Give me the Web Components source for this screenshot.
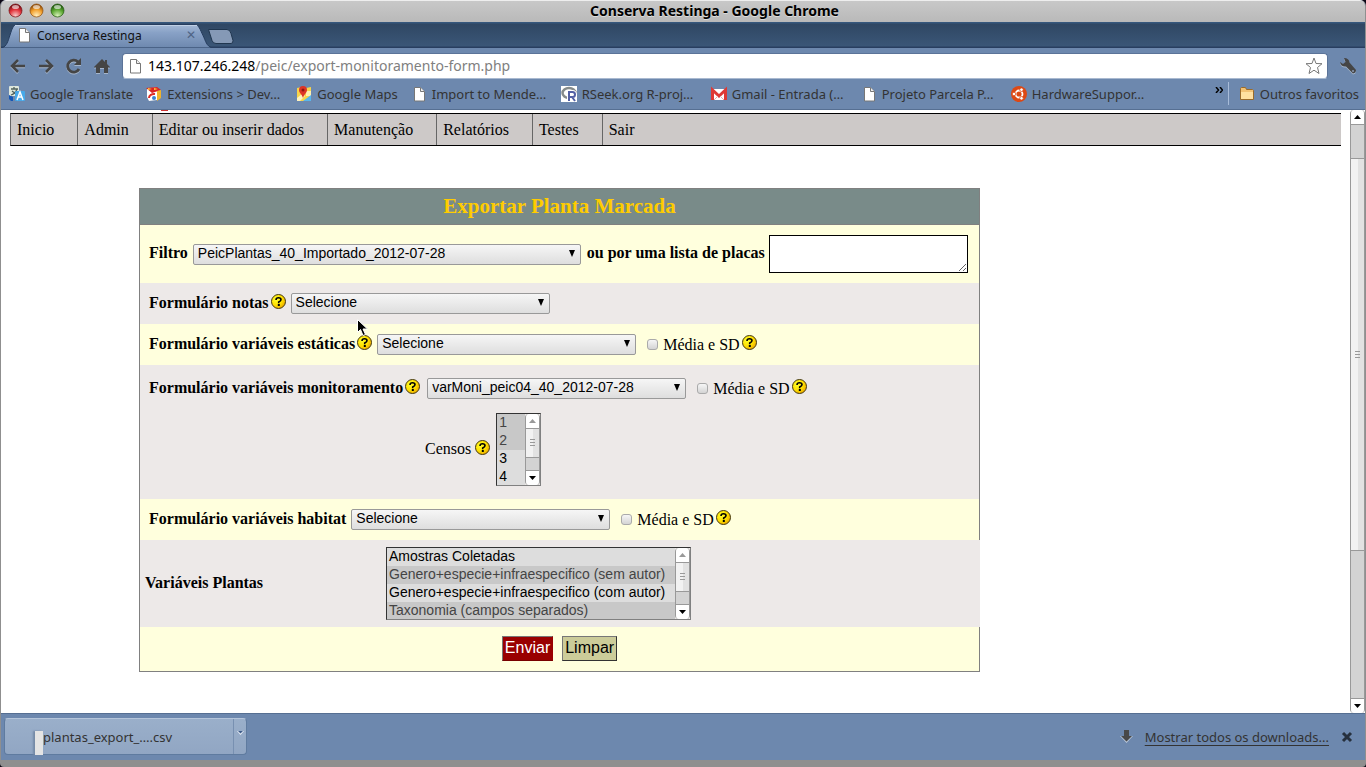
<!DOCTYPE html>
<html lang="pt-BR">

<head>
    <meta charset="UTF-8">
    <meta name="viewport" content="width=device-width, initial-scale=1.0">
    <title>Conserva Restinga</title>
    <style>
        html,
        body {
            height: 100%;
            margin: 0;
            background: #0b0614;
        }
    </style>
</head>

<body>
    <browser-window>
        <title-bar>Conserva Restinga - Google Chrome</title-bar>
        <tab-strip>Conserva Restinga</tab-strip>
        <nav-toolbar></nav-toolbar>
        <bookmarks-bar>
            <bookmark-item icon="translate">Google Translate</bookmark-item>
            <bookmark-item icon="extensions" clipped>Extensions &gt; Dev…</bookmark-item>
            <bookmark-item icon="maps">Google Maps</bookmark-item>
            <bookmark-item icon="page" clipped>Import to Mende…</bookmark-item>
            <bookmark-item icon="rseek" clipped>RSeek.org R-proj…</bookmark-item>
            <bookmark-item icon="gmail" clipped>Gmail - Entrada (…</bookmark-item>
            <bookmark-item icon="page" clipped>Projeto Parcela P…</bookmark-item>
            <bookmark-item icon="ubuntu" clipped>HardwareSuppor…</bookmark-item>
            <bookmark-item slot="other" icon="folder">Outros favoritos</bookmark-item>
        </bookmarks-bar>
        <page-view>
            <page-menu>
                <menu-link>Inicio</menu-link>
                <menu-link>Admin</menu-link>
                <menu-link>Editar ou inserir dados</menu-link>
                <menu-link>Manutenção</menu-link>
                <menu-link>Relatórios</menu-link>
                <menu-link>Testes</menu-link>
                <menu-link last>Sair</menu-link>
            </page-menu>
            <export-form>
                <form-row tone="light" size="tall">
                    <select-field label="Filtro" wide value="PeicPlantas_40_Importado_2012-07-28"></select-field>
                    <text-field label="ou por uma lista de placas"></text-field>
                </form-row>
                <form-row>
                    <select-field label="Formulário notas" help value="Selecione"></select-field>
                </form-row>
                <form-row tone="light">
                    <select-field label="Formulário variáveis estáticas" help value="Selecione"></select-field>
                    <check-field label="Média e SD"></check-field>
                </form-row>
                <form-row size="group">
                    <select-field label="Formulário variáveis monitoramento" help spaced value="varMoni_peic04_40_2012-07-28"></select-field>
                    <check-field label="Média e SD"></check-field>
                    <list-field slot="more" label="Censos" help options="1|2|3|4|5|6" selected="0,1"></list-field>
                </form-row>
                <form-row tone="light">
                    <select-field label="Formulário variáveis habitat" value="Selecione"></select-field>
                    <check-field label="Média e SD"></check-field>
                </form-row>
                <form-row size="list">
                    <list-field label="Variáveis Plantas" strong
                        options="Amostras Coletadas|Genero+especie+infraespecifico (sem autor)|Genero+especie+infraespecifico (com autor)|Taxonomia (campos separados)|Parcela|Coordenadas"
                        selected="1,3"></list-field>
                </form-row>
                <form-row tone="light" size="actions">
                    <form-button kind="send">Enviar</form-button>
                    <form-button kind="clear">Limpar</form-button>
                </form-row>
            </export-form>
        </page-view>
        <download-shelf file="plantas_export_….csv"></download-shelf>
    </browser-window>

    <script>
        const UI_FONT = '"Noto Sans", "Open Sans", sans-serif';

        const PAGE_ICON = `<path d="M3.500 1.500h6l4 4v9.500h-10z" fill="#fff" stroke="#777"/><path d="M9.500 1.500v4h4" fill="#eee" stroke="#777"/>`;

        const ICONS = {
            page: PAGE_ICON,
            translate: `<rect width="10" height="10" rx="1" fill="#dfe8dd"/><path d="M2 3h7M5 1v2M8 3C7 6 5 8 2 9M3 5l4 3" stroke="#53635d" stroke-width="1.300" fill="none"/><path d="M0 9l4 2v4H2L0 13z" fill="#1556b5"/><rect x="6" y="5" width="10" height="10" rx="1" fill="#48a9e8"/><path d="M8 14l3-8 3 8M9 11h4" stroke="#fff" stroke-width="1.500" fill="none"/>`,
            extensions: `<path d="M1 3l10-2v13l-8 1-2-4z" fill="#fff"/><path d="M0 2l11-1 4 3-9 3z" fill="#d92323"/><path d="M11 5l4-1v8l-4 3z" fill="#efb32b"/><path d="M2 2l4 1-4 1zM8 2l4 1-4 1z" fill="#ffc938"/><path d="M3 12a5 4 0 0 1 6-4" stroke="#dc2c26" stroke-width="2" fill="none"/><circle cx="8" cy="12" r="2" fill="#3a82d0"/>`,
            maps: `<path d="M1 2l5-1 4 1 5-1v14H1z" fill="#f8d44a"/><path d="M10 5h5v5h-5z" fill="#ffeeb0"/><path d="M7 15l8-6v6z" fill="#58b6ec"/><path d="M1 12l5-4 3 2-5 5H1z" fill="#fff2bd"/><path d="M7 12C6 8 3 7 3 4a4 4 0 0 1 8 0c0 3-3 4-4 8z" fill="#dc3527"/><circle cx="7" cy="4" r="1.500" fill="#8d160f"/>`,
            rseek: `<rect width="16" height="16" fill="#fff"/><ellipse cx="8" cy="7" rx="6.500" ry="5" fill="none" stroke="#858b8b" stroke-width="2.500"/><path d="M8 15V6h3.500a2.500 2.500 0 0 1 0 5H8M11 11l3 4" fill="none" stroke="#fff" stroke-width="4"/><path d="M8 15V6h3.500a2.500 2.500 0 0 1 0 5H8M11 11l3 4" fill="none" stroke="#5360a4" stroke-width="2"/>`,
            gmail: `<rect y="3" width="16" height="11" fill="#fff"/><path d="M1.500 14V4L8 10l6.500-6v10" fill="none" stroke="#de3a35" stroke-width="3"/><path d="M3 14l4-4M13 14l-4-4" stroke="#e9aaa6"/>`,
            ubuntu: `<circle cx="8" cy="8" r="8" fill="#dd4814"/><circle cx="8" cy="8" r="3.500" fill="none" stroke="#fff" stroke-width="1.800"/><g fill="#fff" stroke="#dd4814" stroke-width=".8"><circle cx="3" cy="8" r="1.800"/><circle cx="10.500" cy="3.700" r="1.800"/><circle cx="10.500" cy="12.300" r="1.800"/></g>`,
            folder: `<path d="M1.500 13.500v-11l1-1h4l1 2h6l1 1v9z" fill="#f3c375" stroke="#9a6b2b"/><path d="M2 6h12v7H2z" fill="#ffe0a0"/>`
        };

        // every element renders the markup that its class returns
        class BaseElement extends HTMLElement {
            constructor() {
                super();
                this.attachShadow({ mode: 'open' });
            }

            connectedCallback() {
                const template = document.createElement('template');
                template.innerHTML = this.render();
                this.shadowRoot.replaceChildren(template.content.cloneNode(true));
            }
        }

        class BrowserWindow extends BaseElement {
            render() {
                return `
        <style>
            :host {
                display: flex; flex-direction: column; height: 100vh; box-sizing: border-box; overflow: hidden;
                border: solid #8f8f8f; border-width: 0 1px 7px; border-radius: 6px 6px 4px 4px;
                background: #6d88ae; font-family: ${UI_FONT};
            }
        </style><slot></slot>`;
            }
        }

        class TitleBar extends BaseElement {
            render() {
                const balls = [['#f8d0ce', '#e3343c', '#7a1015'], ['#fff0c0', '#f2a02c', '#93500b'], ['#d9f2bc', '#5ca832', '#245c10']]
                    .map(([light, mid, dark], i) => `
                <button aria-label="${['Fechar', 'Minimizar', 'Maximizar'][i]}"><svg width="15" height="15" viewBox="0 0 15 15">
                    <defs><radialGradient id="g${i}" cx=".5" cy=".9" r=".8"><stop offset="0" stop-color="${light}"/><stop offset=".6" stop-color="${mid}"/><stop offset="1" stop-color="${dark}"/></radialGradient></defs>
                    <circle cx="7.500" cy="7.500" r="6.500" fill="url(#g${i})" stroke="${dark}" stroke-opacity=".7"/>
                    <ellipse cx="7.500" cy="4" rx="3.500" ry="2" fill="#fff" opacity=".6"/></svg></button>`).join('');
                return `
        <style>
            :host {
                display: grid; grid-template-columns: 1fr auto 1fr; align-items: center; flex: none; height: 22px; box-sizing: border-box;
                padding: 0 0 2px 7px; border-top: 1px solid #eee; background: linear-gradient(#c8c8c8, #b9b9b9);
            }
            div { display: flex; gap: 6px; }
            button { display: flex; padding: 0; border: 0; background: none; }
            h1 { margin: 0 0 0 56px; font-size: 14px; line-height: 18px; font-weight: bold; color: #000; text-shadow: 0 1px #ddd; }
        </style>
        <div>${balls}</div><h1><slot></slot></h1>`;
            }
        }

        class TabStrip extends BaseElement {
            render() {
                return `
        <style>
            :host {
                display: flex; align-items: flex-end; flex: none; height: 26px; box-sizing: border-box; padding-left: 1px;
                background: linear-gradient(#36577c 0, #36577c 1px, #2f4763 2px, #3a5677 24px, #283e60 25px);
            }
            .tab { display: grid; width: 210px; height: 24px; }
            .tab > * { grid-area: 1 / 1; }
            .label { display: flex; align-items: center; gap: 5px; padding: 0 16px 2px 14px; font-size: 12px; color: #111; }
            .label span { flex: 1; white-space: nowrap; }
            button { padding: 0; border: 0; background: none; color: #4f6484; font-size: 12px; line-height: 16px; }
            .new { display: flex; margin-left: -5px; padding-bottom: 4px; }
        </style>
        <div class="tab">
            <svg width="210" height="24" viewBox="0 0 210 24"><defs><linearGradient id="t" x2="0" y2="1"><stop offset="0" stop-color="#a5bad6"/><stop offset=".35" stop-color="#88a1c6"/><stop offset="1" stop-color="#6d88ae"/></linearGradient></defs>
                <path d="M0 24c5-2 6-7 8-13S11 1 15 .5h178c4 .5 5 5 8 11s3 10 9 12.500z" fill="url(#t)" stroke="#263d5e"/><path d="M13 1.500h182" stroke="#bfd0e5"/></svg>
            <div class="label"><svg width="16" height="16" viewBox="0 0 16 16">${PAGE_ICON}</svg><span><slot></slot></span><button aria-label="Fechar guia">✕</button></div>
        </div>
        <button class="new" aria-label="Nova guia"><svg width="27" height="16" viewBox="0 0 27 16"><path d="M1.500 1.500H20q3 0 4 4l2 7q0 3-2 3H9q-3 0-4-3z" fill="#8599b6" stroke="#20364f"/></svg></button>`;
            }
        }

        class NavToolbar extends BaseElement {
            render() {
                const tool = (label, shape) => `<button aria-label="${label}"><svg width="16" height="16" viewBox="0 0 16 16">${shape}</svg></button>`;
                return `
        <style>
            :host { display: flex; align-items: center; flex: none; height: 35px; padding: 0 9px 0 9px; gap: 12px; background: #6d88ae; }
            button { display: flex; padding: 0; border: 0; background: none; filter: drop-shadow(0 1px #a6b6cc); }
            .box {
                display: flex; align-items: center; flex: 1; height: 24px; padding: 0 4px; gap: 5px; border: 1px solid #5b7398;
                border-bottom-color: #a9b9d0; border-radius: 4px; background: #fff;
            }
            .url { display: grid; flex: 1; font-size: 14px; line-height: 20px; color: #808080; }
            .url > * { grid-area: 1 / 1; }
            .url b { font-weight: normal; color: #000; }
            input { min-width: 0; padding: 0; border: 0; outline: 0; background: none; font: inherit; color: transparent; }
            .box button { filter: none; }
        </style>
        ${tool('Voltar', '<path d="M8 2L2 8l6 6M2 8h13" fill="none" stroke="#454545" stroke-width="2.500"/>')}
        ${tool('Avançar', '<path d="M8 2l6 6-6 6M14 8H1" fill="none" stroke="#454545" stroke-width="2.500"/>')}
        ${tool('Atualizar', '<path d="M13 11A6 6 0 1 1 12 4" fill="none" stroke="#454545" stroke-width="2.800"/><path d="M15 0v7H8z" fill="#454545"/>')}
        ${tool('Página inicial', '<path d="M8 1L0 9l1 1 1-1v6h4v-5h4v5h4V9l1 1 1-1-3-3V2h-2v2z" fill="#454545"/>')}
        <div class="box">
            <svg width="16" height="16" viewBox="0 0 16 16">${PAGE_ICON}</svg>
            <div class="url"><span><b>143.107.246.248</b>/peic/export-monitoramento-form.php</span><input aria-label="Endereço"></div>
            <button aria-label="Favorito"><svg width="18" height="18" viewBox="0 0 18 18"><path d="M9 1l2 5.500 6 .2-4.500 3.800 1.500 6L9 13.200 4 16.500l1.500-6L1 6.700l6-.2z" fill="#fff" stroke="#777" stroke-linejoin="round"/></svg></button>
        </div>
        ${tool('Ferramentas', '<path d="M4 0q5 0 5.500 4.500L16 12q0 3-3 3.500L6 8.500Q1 9 0 4l3 2 2.500-2z" fill="#454545"/><circle cx="13" cy="13" r="1" fill="#8b9bb4"/>')}`;
            }
        }

        class BookmarksBar extends BaseElement {
            render() {
                return `
        <style>
            :host {
                display: flex; align-items: center; flex: none; height: 27px; box-sizing: border-box; padding: 0 6px 5px 8px;
                border-bottom: 1px solid #566f92; background: #6d88ae;
            }
            nav { display: flex; flex: 1; gap: 13px; min-width: 0; overflow: hidden; }
            .more { display: flex; padding: 0 0 8px; border: 0; background: none; }
            i { width: 1px; height: 23px; margin: 0 10px 0 5px; background: #a7bbd8; }
        </style>
        <nav><slot></slot></nav>
        <button class="more" aria-label="Mais favoritos"><svg width="8" height="6" viewBox="0 0 8 6"><path d="M1 0l2.500 3L1 6M5 0l2.500 3L5 6" fill="none" stroke="#000" stroke-width="1.500"/></svg></button>
        <i></i><slot name="other"></slot>`;
            }
        }

        class BookmarkItem extends BaseElement {
            render() {
                return `
        <style>
            :host { display: block; flex: none; }
            :host([clipped]) { min-width: 137px; }
            a { display: flex; align-items: center; gap: 5px; font-size: 13px; line-height: 18px; color: #333; text-decoration: none; white-space: nowrap; }
        </style>
        <a href="#"><svg width="16" height="16" viewBox="0 0 16 16">${ICONS[this.getAttribute('icon')]}</svg><slot></slot></a>`;
            }
        }

        // drawn scrollbar; lead, thumb and rest are flex shares of the track
        class ScrollTrack extends BaseElement {
            render() {
                const lead = this.getAttribute('lead') || 0;
                const thumb = this.getAttribute('thumb');
                const rest = this.getAttribute('rest');
                const up = lead > 0 ? '#000' : '#999';
                return `
        <style>
            :host { display: flex; flex-direction: column; flex: none; width: 15px; box-sizing: border-box; border: 1px solid #999; border-width: 0 1px; border-radius: 4px; background: #d3d3d3; overflow: hidden; }
            div { display: flex; align-items: center; justify-content: center; flex: none; height: 14px; background: #fff; }
            .up { border-bottom: 1px solid #999; }
            .down { border-top: 1px solid #999; }
            .lead { flex: ${lead} 1 0; height: auto; background: none; }
            .rest { flex: ${rest} 1 0; height: auto; background: none; }
            .thumb { flex: ${thumb} 1 0; height: auto; border: solid #999; border-width: ${lead > 0 ? 1 : 0}px 0 1px; background: linear-gradient(90deg, #f2f2f2 55%, #e2e2e2 55%); }
        </style>
        <div class="up"><svg width="7" height="4" viewBox="0 0 7 4"><path d="M0 4L3.500 0 7 4z" fill="${up}"/></svg></div>
        <div class="lead"></div>
        <div class="thumb"><svg width="5" height="7" viewBox="0 0 5 7"><path d="M0 .5h5M0 3.500h5M0 6.500h5" stroke="#999"/></svg></div>
        <div class="rest"></div>
        <div class="down"><svg width="7" height="4" viewBox="0 0 7 4"><path d="M0 0l3.500 4L7 0z"/></svg></div>`;
            }
        }

        class PageView extends BaseElement {
            render() {
                return `
        <style>
            :host { display: flex; flex: 1; min-height: 0; background: #fff; color: #000; font: 16px/18px "Liberation Serif", serif; }
            main { position: relative; flex: 1; min-width: 0; padding: 3px 9px 0 9px; overflow: hidden; }
            .logo { position: absolute; top: 0; left: 160px; width: 7px; height: 1px; background: #c33; }
            .pointer { position: absolute; top: 209px; left: 356px; }
        </style>
        <main><i class="logo"></i><slot></slot>
            <svg class="pointer" width="12" height="18" viewBox="0 0 12 18"><path d="M.5.500v13l3-3 2.500 6 2.500-1-2.500-5.500h4.500z" fill="#000" stroke="#fff"/></svg>
        </main>
        <scroll-track lead="33" thumb="392" rest="148"></scroll-track>`;
            }
        }

        class PageMenu extends BaseElement {
            render() {
                return `
        <style>
            :host { display: block; }
            nav { display: flex; height: 31px; border: 1px solid #000; border-width: 1px 0; border-left: 1px solid #666; background: #cdc9c8; }
        </style><nav><slot></slot></nav>`;
            }
        }

        class MenuLink extends BaseElement {
            render() {
                return `
        <style>
            :host { display: block; border-right: 1px solid #666; }
            :host([last]) { border: 0; }
            a { display: block; padding: 0 23px 0 6px; line-height: 31px; color: #000; text-decoration: none; }
        </style><a href="#"><slot></slot></a>`;
            }
        }

        class ExportForm extends BaseElement {
            render() {
                return `
        <style>
            :host { display: block; max-width: 841px; margin: 42px 0 0 129px; }
            form { border: 1px solid #808080; }
            h2 { margin: 0; padding: 5px 0 6px; border-bottom: 1px solid #808080; background: #798b89; color: #fc0; font-size: 21px; line-height: 24px; text-align: center; }
        </style><form><h2>Exportar Planta Marcada</h2><slot></slot></form>`;
            }
        }

        class FormRow extends BaseElement {
            render() {
                return `
        <style>
            :host { display: block; padding: 10px 9px; background: #ede9e8; }
            :host([tone="light"]) { background: #ffd; }
            :host([size="group"]) { padding: 13px 9px; }
            :host([size="list"]) { padding: 7px 5px; margin-right: -1px; }
            :host([size="actions"]) { padding: 9px 0 10px; }
            .line { display: flex; align-items: center; min-height: 21px; }
            :host([size="actions"]) .line { justify-content: center; gap: 9px; }
            .more { display: flex; padding-left: 276px; }
            :host([size="group"]) .more { padding-top: 14px; }
        </style>
        <div class="line"><slot></slot></div><div class="more"><slot name="more"></slot></div>`;
            }
        }

        class HelpMark extends BaseElement {
            render() {
                return `
        <style>
            :host { display: inline-flex; flex: none; }
            button { display: flex; padding: 0 0 5px; border: 0; background: none; }
        </style>
        <button type="button" aria-label="Ajuda"><svg width="15" height="15" viewBox="0 0 15 15">
            <defs><radialGradient id="h" cx=".35" cy=".35" r=".7"><stop offset="0" stop-color="#ffff2a"/><stop offset=".6" stop-color="#ffdf00"/><stop offset="1" stop-color="#eda900"/></radialGradient></defs>
            <circle cx="7.500" cy="7.500" r="7" fill="url(#h)" stroke="#433810"/>
            <path d="M5 6Q5 3.800 7.500 3.800T10 5.800Q10 7 7.700 8v1.200" fill="none" stroke="#000" stroke-width="1.600"/><rect x="6.800" y="10" width="2" height="2"/></svg></button>`;
            }
        }

        class SelectField extends BaseElement {
            render() {
                const help = this.hasAttribute('help') ? '<help-mark></help-mark>' : '';
                return `
        <style>
            :host { display: flex; align-items: center; }
            label { padding-bottom: 2px; font-weight: bold; white-space: nowrap; }
            help-mark { margin-left: 2px; }
            .box { display: grid; align-items: center; width: 259px; margin-left: 5px; }
            :host([wide]) .box { width: 388px; }
            :host([spaced]) .box { margin-left: 7px; }
            .box > * { grid-area: 1 / 1; }
            select {
                appearance: none; width: 100%; height: 21px; padding: 0 20px 2px 4px; border: 1px solid #999; border-radius: 2px;
                background: linear-gradient(#f6f6f6, #dedede); color: #000; font: 14px/17px "Liberation Sans", sans-serif;
            }
            svg { justify-self: end; margin: 0 6px 2px 0; pointer-events: none; }
        </style>
        <label for="pick">${this.getAttribute('label')}</label>${help}
        <span class="box"><select id="pick"><option>${this.getAttribute('value')}</option></select><svg width="6" height="7" viewBox="0 0 6 7"><path d="M0 0h6L3 7z"/></svg></span>`;
            }
        }

        class TextField extends BaseElement {
            render() {
                return `
        <style>
            :host { display: flex; align-items: center; margin-left: 6px; }
            label { padding-bottom: 2px; font-weight: bold; white-space: nowrap; }
            textarea { width: 199px; height: 38px; margin-left: 4px; box-sizing: border-box; border: 1px solid #000; background: #fff; }
        </style>
        <label for="plates">${this.getAttribute('label')}</label><textarea id="plates"></textarea>`;
            }
        }

        class CheckField extends BaseElement {
            render() {
                return `
        <style>
            :host { display: flex; align-items: center; margin-left: 11px; }
            input { appearance: none; width: 11px; height: 11px; margin: 0 5px 0 0; border: 1px solid #aaa; border-radius: 3px; background: linear-gradient(#f6f6f6, #d4d4d4); }
            help-mark { margin-left: 2px; }
        </style>
        <input type="checkbox" id="mean"><label for="mean">${this.getAttribute('label')}</label><help-mark></help-mark>`;
            }
        }

        class ListField extends BaseElement {
            render() {
                const picked = this.getAttribute('selected').split(',').map(Number);
                const options = this.getAttribute('options').split('|')
                    .map((text, i) => `<option${picked.includes(i) ? ' selected' : ''}>${text}</option>`).join('');
                const help = this.hasAttribute('help') ? '<help-mark></help-mark>' : '';
                return `
        <style>
            :host { display: flex; align-items: center; }
            label { padding-bottom: 2px; }
            :host([strong]) label { width: 241px; font-weight: bold; }
            help-mark { margin-left: 4px; }
            .box { display: flex; height: 73px; box-sizing: border-box; margin-left: 6px; border: 1px solid #333; border-right-color: #808080; border-bottom-color: #808080; }
            :host([strong]) .box { margin-left: 0; }
            select {
                appearance: none; min-width: 28px; height: 71px; padding: 0; border: 0; border-radius: 0; outline: 0; overflow: hidden; scrollbar-width: none;
                background: #ddd; color: #000; font: 14px/16px "Liberation Sans", sans-serif;
            }
            :host([strong]) select { min-width: 288px; }
            option { min-height: 18px; height: 18px; padding: 0 2px 2px; box-sizing: border-box; }
            option:checked { background: linear-gradient(#c8c8c8, #c8c8c8); color: #444; }
        </style>
        <label for="list">${this.getAttribute('label')}</label>${help}
        <span class="box"><select id="list" multiple size="4">${options}</select><scroll-track thumb="29" rest="13"></scroll-track></span>`;
            }
        }

        class FormButton extends BaseElement {
            render() {
                return `
        <style>
            :host { display: block; }
            button { height: 25px; padding: 0 2px 2px; border: 1px solid #333; border-top-color: #777; border-left-color: #777; background: #cc9; color: #000; font: 16px/20px "Liberation Sans", sans-serif; }
            :host([kind="send"]) button { border-color: #777 #900 #700 #777; background: #900; color: #fff; }
        </style><button type="button"><slot></slot></button>`;
            }
        }

        class DownloadShelf extends BaseElement {
            render() {
                return `
        <style>
            :host { display: flex; align-items: center; flex: none; height: 47px; box-sizing: border-box; padding: 0 12px 1px 3px; border-top: 1px solid #566f92; background: #6d88ae; color: #333; font-size: 13px; }
            .item { display: flex; width: 243px; height: 37px; box-sizing: border-box; border: 1px solid #5f7b9f; border-top-color: #b5c5da; border-radius: 4px; background: linear-gradient(#9aafca, #91a6c3); }
            button { padding: 0; border: 0; background: none; font: inherit; color: inherit; }
            .file { display: flex; align-items: center; flex: 1; padding-left: 30px; }
            .file i { width: 8px; height: 24px; margin-top: 12px; background: #e4e4e4; box-shadow: -2px 0 2px #7489a6; }
            .menu { display: flex; justify-content: center; width: 13px; padding-top: 12px; border-left: 1px solid #7890b1; }
            .all { display: flex; align-items: center; gap: 12px; margin-left: auto; }
            a { color: #333; text-underline-offset: 3px; }
            .close { display: flex; }
        </style>
        <div class="item">
            <button class="file"><i></i>${this.getAttribute('file')}</button>
            <button class="menu" aria-label="Opções"><svg width="7" height="4" viewBox="0 0 7 4"><path d="M0 0l3.500 4L7 0z" fill="#e8eef6"/><path d="M1 0l2.500 2.500L6 0z" fill="#3e5c8a"/></svg></button>
        </div>
        <div class="all">
            <svg width="13" height="13" viewBox="0 0 13 13"><path d="M4 0h5v6h4l-6.500 7L0 6h4z" fill="#b9c5d6"/><path d="M4 0h5v6h3l-5.500 5.500L1 6h3z" fill="#484848"/></svg>
            <a href="#">Mostrar todos os downloads...</a>
            <button class="close" aria-label="Fechar"><svg width="12" height="12" viewBox="0 0 12 12"><path d="M2 2l8 8M10 2l-8 8" stroke="#26303e" stroke-width="3"/></svg></button>
        </div>`;
            }
        }

        customElements.define('browser-window', BrowserWindow);
        customElements.define('title-bar', TitleBar);
        customElements.define('tab-strip', TabStrip);
        customElements.define('nav-toolbar', NavToolbar);
        customElements.define('bookmarks-bar', BookmarksBar);
        customElements.define('bookmark-item', BookmarkItem);
        customElements.define('scroll-track', ScrollTrack);
        customElements.define('page-view', PageView);
        customElements.define('page-menu', PageMenu);
        customElements.define('menu-link', MenuLink);
        customElements.define('export-form', ExportForm);
        customElements.define('form-row', FormRow);
        customElements.define('help-mark', HelpMark);
        customElements.define('select-field', SelectField);
        customElements.define('text-field', TextField);
        customElements.define('check-field', CheckField);
        customElements.define('list-field', ListField);
        customElements.define('form-button', FormButton);
        customElements.define('download-shelf', DownloadShelf);
    </script>
</body>

</html>
